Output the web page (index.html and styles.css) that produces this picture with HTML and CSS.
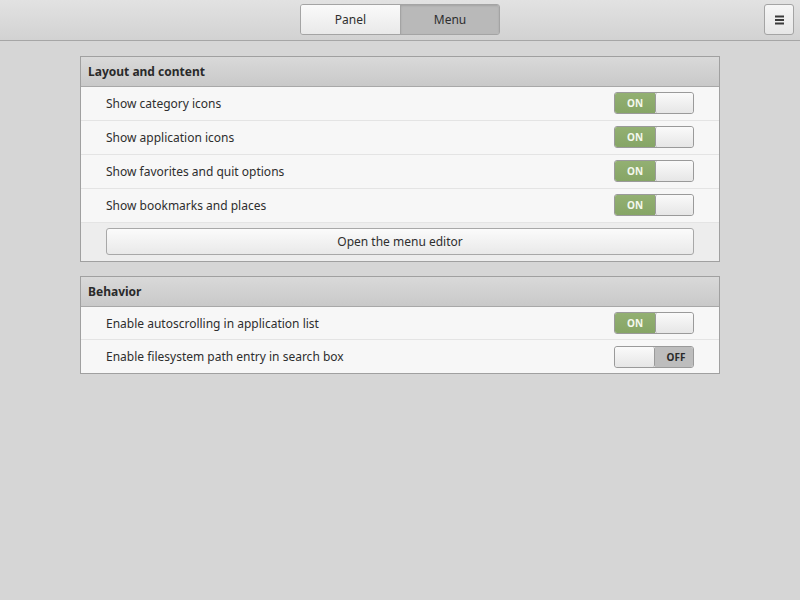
FILE: index.html
```html
<!DOCTYPE html>
<html>
<head>
<meta charset="utf-8">
<link rel="stylesheet" href="styles.css">
</head>
<body>
<header class="headerbar">
  <div class="switcher">
    <button class="sw-btn">Panel</button>
    <button class="sw-btn active">Menu</button>
  </div>
  <button class="menu-btn" aria-label="menu">
    <svg width="9" height="10" viewBox="0 0 9 10"><rect x="0" y="0.5" width="9" height="2" fill="#3a3a3a"/><rect x="0" y="4" width="9" height="2" fill="#3a3a3a"/><rect x="0" y="7.5" width="9" height="2" fill="#3a3a3a"/></svg>
  </button>
</header>
<main class="content">
  <section class="frame">
    <div class="frame-title">Layout and content</div>
    <div class="row"><span>Show category icons</span><div class="toggle on"><span class="lbl">ON</span><span class="knob"></span></div></div>
    <div class="row"><span>Show application icons</span><div class="toggle on"><span class="lbl">ON</span><span class="knob"></span></div></div>
    <div class="row"><span>Show favorites and quit options</span><div class="toggle on"><span class="lbl">ON</span><span class="knob"></span></div></div>
    <div class="row"><span>Show bookmarks and places</span><div class="toggle on"><span class="lbl">ON</span><span class="knob"></span></div></div>
    <div class="row btn-row"><button class="wide-btn">Open the menu editor</button></div>
  </section>
  <section class="frame compact">
    <div class="frame-title">Behavior</div>
    <div class="row"><span>Enable autoscrolling in application list</span><div class="toggle on"><span class="lbl">ON</span><span class="knob"></span></div></div>
    <div class="row"><span>Enable filesystem path entry in search box</span><div class="toggle off"><span class="knob"></span><span class="lbl">OFF</span></div></div>
  </section>
</main>
</body>
</html>
```
FILE: styles.css
```css
* { box-sizing: border-box; }
html, body { margin: 0; padding: 0; }
body {
  width: 800px; height: 600px;
  background: #d6d6d6;
  font-family: "Noto Sans", "Open Sans", sans-serif;
  font-size: 12px;
  color: #2e2e2e;
}
.headerbar {
  height: 41px;
  background: linear-gradient(#e2e2e2, #d2d2d2);
  border-bottom: 1px solid #a6a6a6;
  display: flex; justify-content: center; align-items: flex-start;
  padding-top: 4px;
  position: relative;
}
.switcher {
  display: flex;
  border: 1px solid #a4a4a4;
  border-radius: 3px;
  overflow: hidden;
  height: 31px;
}
.sw-btn {
  width: 99px; height: 29px;
  border: 0; margin: 0; padding: 0;
  font: inherit; color: #2e2e2e;
  background: linear-gradient(#fafafa, #e9e9e9);
}
.sw-btn.active {
  background: #b9b9b9;
  border-left: 1px solid #a4a4a4;
  box-shadow: inset 0 1px 2px rgba(0,0,0,0.12);
}
.menu-btn {
  position: absolute; right: 6px; top: 4px;
  width: 30px; height: 31px;
  border: 1px solid #a4a4a4; border-radius: 3px;
  background: linear-gradient(#f6f6f6, #e6e6e6);
  display: flex; align-items: center; justify-content: center;
  padding: 0;
}
.content {
  padding: 15px 80px 0;
  display: flex; flex-direction: column; gap: 14px;
}
.frame {
  border: 1px solid #a0a0a0;
  background: #f7f7f7;
}
.frame-title {
  height: 30px;
  display: flex; align-items: center;
  padding-left: 7px;
  font-weight: bold;
  background: linear-gradient(#d9d9d9, #c9c9c9);
  border-bottom: 1px solid #a8a8a8;
  color: #2a2a2a;
}
.row {
  height: 34px;
  display: flex; align-items: center; justify-content: space-between;
  padding: 0 25px 1px;
  border-bottom: 1px solid #e4e4e4;
}
.compact .row { height: 33px; padding-bottom: 0; }
.row:last-child { border-bottom: 0; }
.btn-row {
  height: 38px;
  background: #ededed;
  padding-bottom: 0;
}
.wide-btn {
  width: 100%; height: 27px;
  margin-top: -1px;
  font: inherit; color: #2e2e2e;
  border: 1px solid #a8a8a8; border-radius: 3px;
  background: linear-gradient(#fbfbfb, #e9e9e9);
}
.toggle {
  width: 80px; height: 22px;
  border: 1px solid #9a9a9a;
  border-radius: 3px;
  display: flex; overflow: hidden;
  font-size: 10px; font-weight: bold;
}
.toggle .lbl {
  width: 40px; display: flex; align-items: center; justify-content: center;
}
.toggle.on .lbl {
  background: linear-gradient(#93b072, #86a566);
  color: #f4f8ee;
}
.toggle.off .lbl {
  width: 38px;
  background: #bdbdbd;
  color: #2a2a2a;
  padding-left: 4px;
}
.toggle .knob {
  flex: 1;
  background: linear-gradient(#fafafa, #e6e6e6);
  border-left: 1px solid #9a9a9a;
  border-radius: 2px;
}
.toggle.off .knob {
  border-left: 0;
  border-right: 1px solid #9a9a9a;
}
```
